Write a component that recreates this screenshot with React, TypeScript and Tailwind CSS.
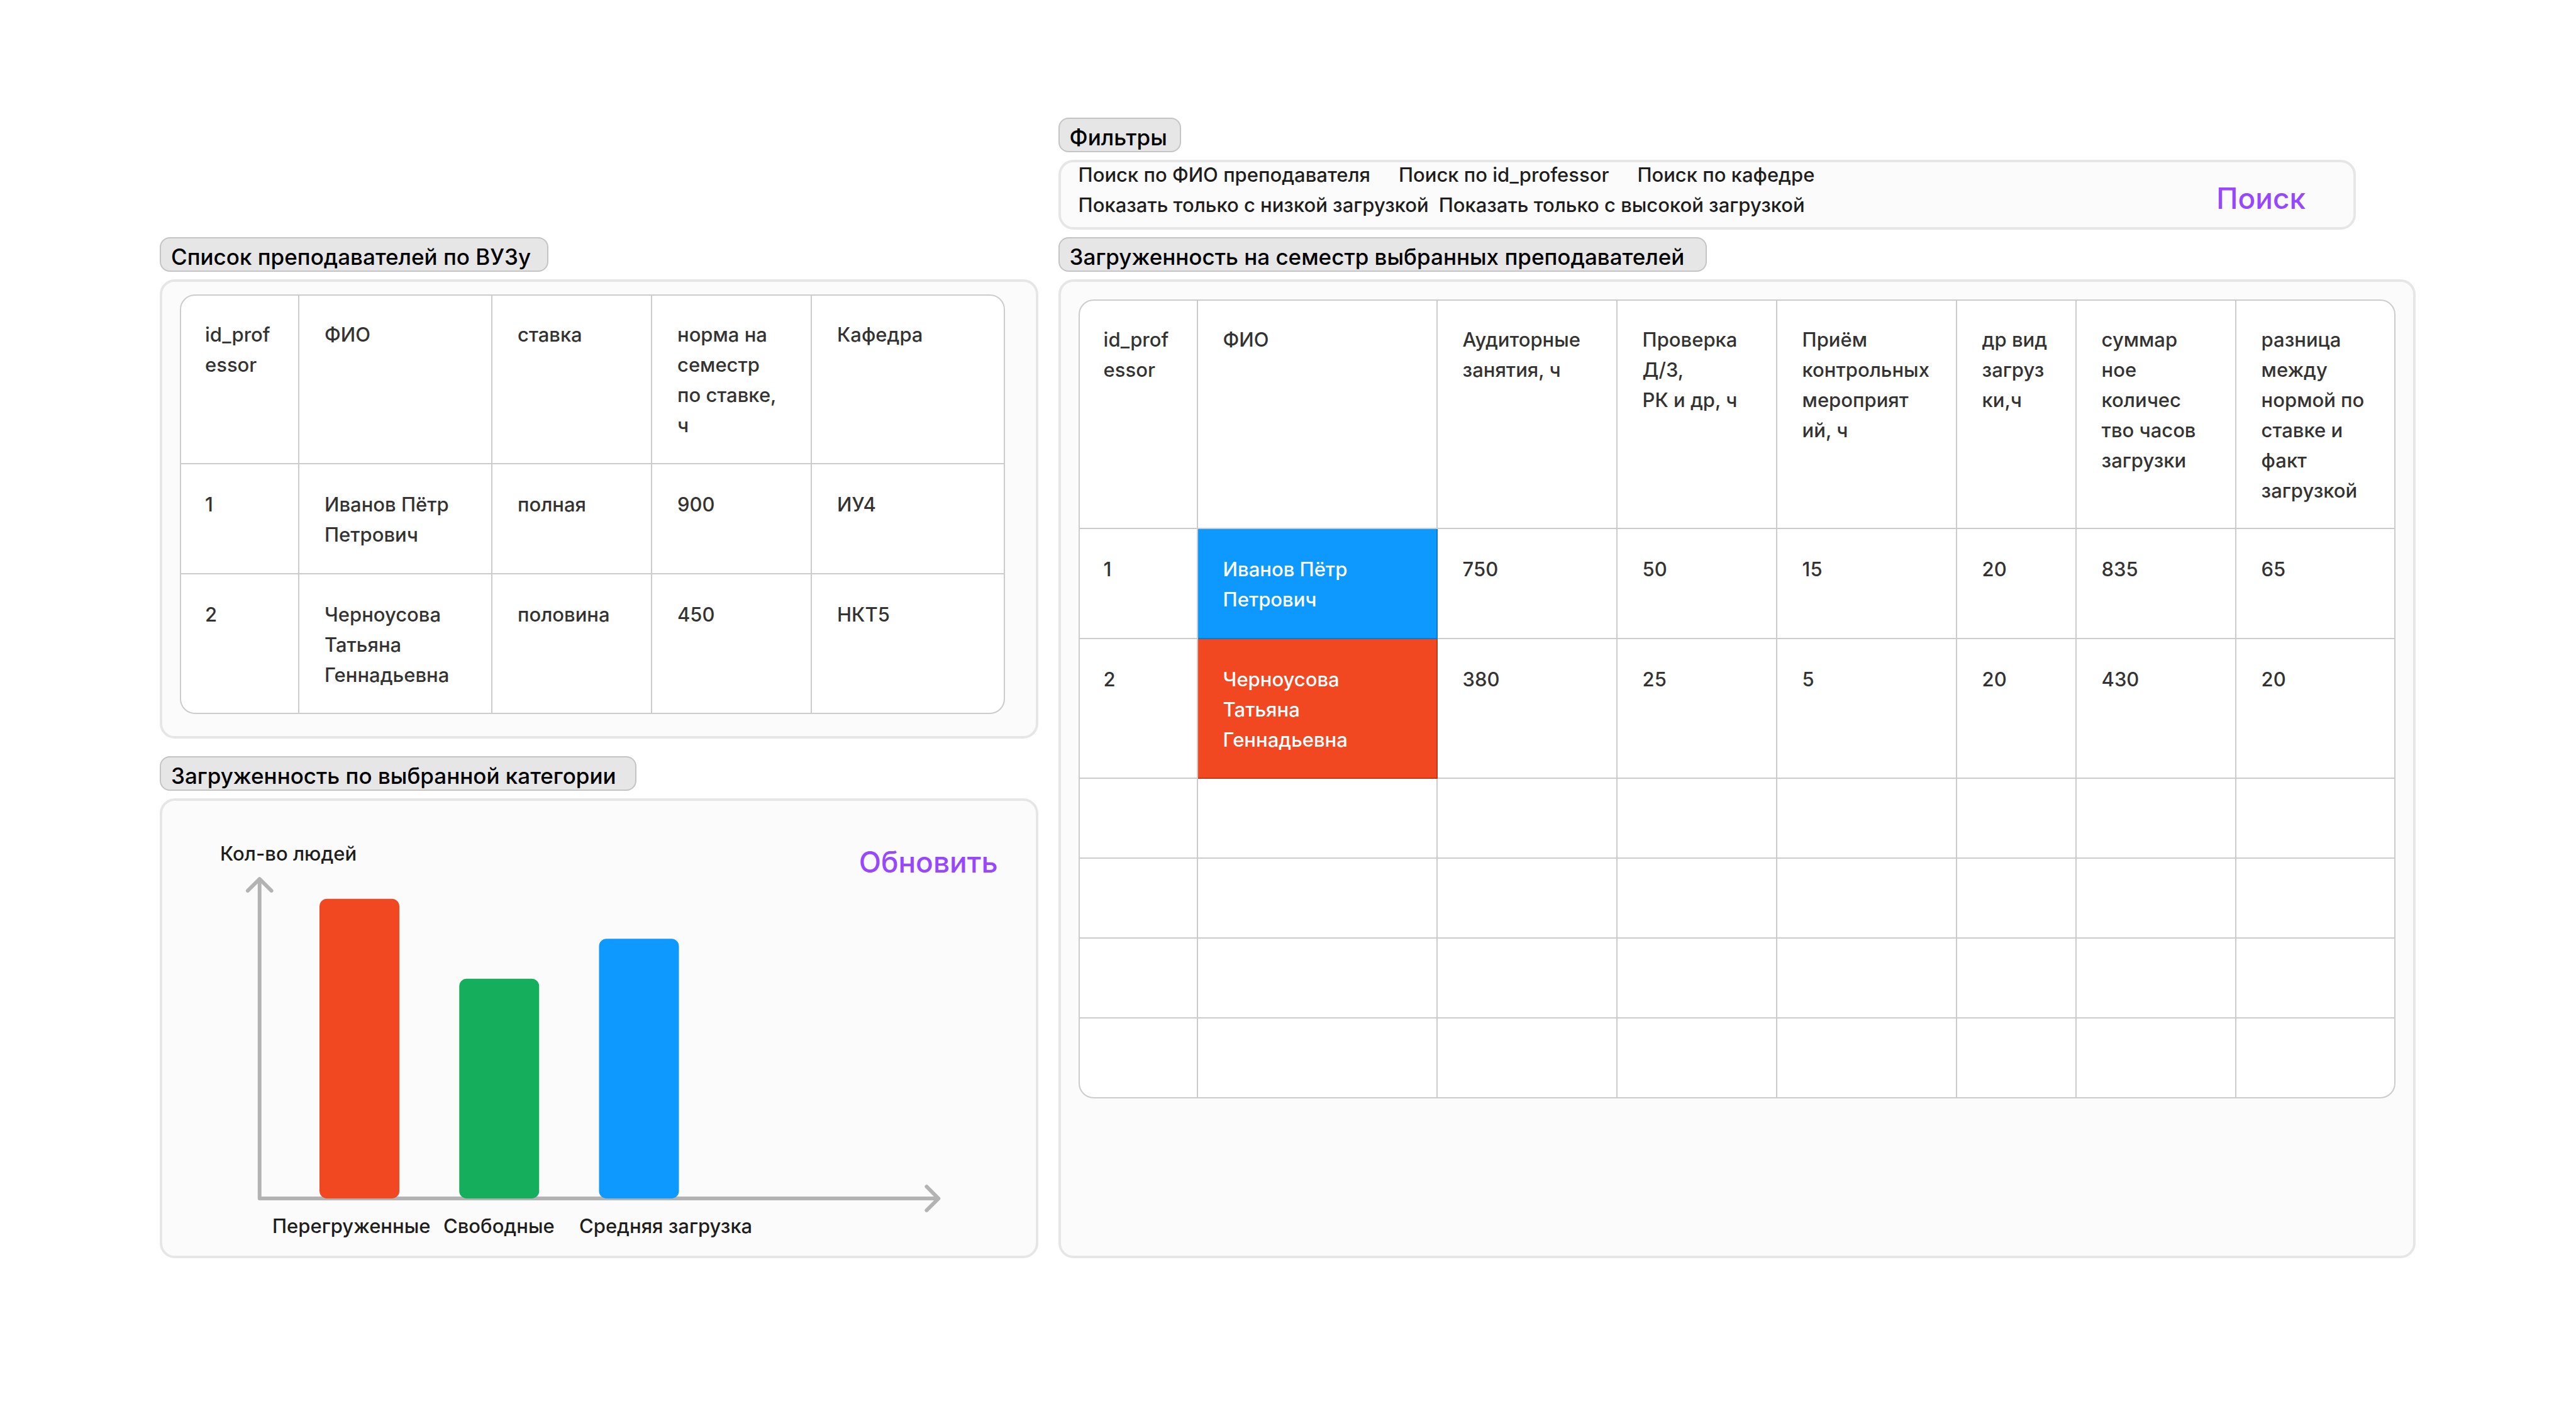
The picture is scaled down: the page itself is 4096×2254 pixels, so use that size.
type Column = { title: string; width: string };
type Cell = { text: string; tone?: "blue" | "red" };
type Row = { height: string; cells: Cell[] };

const plain = (...texts: string[]): Cell[] => texts.map((text) => ({ text }));

const professorColumns: Column[] = [
  { title: "id_prof\nessor", width: "w-[188px]" },
  { title: "ФИО", width: "w-[307px]" },
  { title: "ставка", width: "w-[254px]" },
  { title: "норма на\nсеместр\nпо ставке,\nч", width: "w-[254px]" },
  { title: "Кафедра", width: "w-[306px]" },
];

const professorRows: Row[] = [
  { height: "h-[175px]", cells: plain("1", "Иванов Пётр\nПетрович", "полная", "900", "ИУ4") },
  { height: "h-[220px]", cells: plain("2", "Черноусова\nТатьяна\nГеннадьевна", "половина", "450", "НКТ5") },
];

const loadColumns: Column[] = [
  { title: "id_prof\nessor", width: "w-[188px]" },
  { title: "ФИО", width: "w-[381px]" },
  { title: "Аудиторные\nзанятия, ч", width: "w-[286px]" },
  { title: "Проверка\nД/З,\nРК и др, ч", width: "w-[254px]" },
  { title: "Приём\nконтрольных\nмероприят\nий, ч", width: "w-[286px]" },
  { title: "др вид\nзагруз\nки,ч", width: "w-[190px]" },
  { title: "суммар\nное\nколичес\nтво часов\nзагрузки", width: "w-[254px]" },
  { title: "разница\nмежду\nнормой по\nставке и\nфакт\nзагрузкой", width: "w-[252px]" },
];

const emptyCells = plain("", "", "", "", "", "", "", "");

const loadRows: Row[] = [
  {
    height: "h-[175px]",
    cells: [{ text: "1" }, { text: "Иванов Пётр\nПетрович", tone: "blue" }, ...plain("750", "50", "15", "20", "835", "65")],
  },
  {
    height: "h-[222px]",
    cells: [
      { text: "2" },
      { text: "Черноусова\nТатьяна\nГеннадьевна", tone: "red" },
      ...plain("380", "25", "5", "20", "430", "20"),
    ],
  },
  { height: "h-[127px]", cells: emptyCells },
  { height: "h-[127px]", cells: emptyCells },
  { height: "h-[127px]", cells: emptyCells },
  { height: "h-[125px]", cells: emptyCells },
];

const toneClass = {
  blue: "bg-[#0d99ff] text-white",
  red: "bg-[#f24822] text-white",
};

function SectionLabel({ text, id, pad }: { text: string; id: string; pad: string }) {
  return (
    <h2
      id={id}
      className={`mb-3 flex h-[55px] w-fit shrink-0 items-center rounded-2xl border-2 border-[#c4c4c4] bg-[#e6e6e6] pt-1.5 pl-4 text-[35px] leading-[44px] font-medium whitespace-nowrap text-black ${pad}`}
    >
      {text}
    </h2>
  );
}

function DataTable({
  columns,
  rows,
  headHeight,
  labelledBy,
}: {
  columns: Column[];
  rows: Row[];
  headHeight: string;
  labelledBy: string;
}) {
  return (
    <div className="overflow-hidden rounded-3xl border-2 border-[#cccccc] bg-white">
      <table
        aria-labelledby={labelledBy}
        className="w-full table-fixed border-separate border-spacing-0 text-left text-[31px] leading-[48px] text-[#333333]"
      >
        <colgroup>
          {columns.map((column, i) => (
            <col key={i} className={column.width} />
          ))}
        </colgroup>
        <thead>
          <tr className={headHeight}>
            {columns.map((column, i) => (
              <th
                key={i}
                scope="col"
                className="border-r-2 border-b-2 border-black/20 pt-[38px] pl-10 align-top font-medium whitespace-pre first:pl-[38px] last:border-r-0"
              >
                {column.title}
              </th>
            ))}
          </tr>
        </thead>
        <tbody className="[&>tr:last-child>td]:border-b-0">
          {rows.map((row, r) => (
            <tr key={r} className={row.height}>
              {row.cells.map((cell, c) => (
                <td
                  key={c}
                  className={`border-r-2 border-b-2 border-black/20 pt-10 pl-10 align-top font-medium whitespace-pre first:pl-[38px] last:border-r-0 ${cell.tone ? toneClass[cell.tone] : ""}`}
                >
                  {cell.text}
                </td>
              ))}
            </tr>
          ))}
        </tbody>
      </table>
    </div>
  );
}

const bars = [
  { x: 512, height: 480, fill: "#f24822" },
  { x: 736, height: 352, fill: "#14ae5c" },
  { x: 960, height: 416, fill: "#0d99ff" },
];

function LoadChart() {
  return (
    <svg viewBox="384 1400 1152 544" className="block h-[540px] w-[1143px]" aria-hidden="true">
      <g fill="none" stroke="#b3b3b3" strokeWidth="6" strokeLinecap="round" strokeLinejoin="round">
        <path d="M416 1409V1920H1503" />
        <path d="M397 1427L416 1408L435 1427" />
        <path d="M1485 1901L1504 1920L1485 1939" />
      </g>
      {bars.map((bar) => (
        <rect key={bar.x} x={bar.x} y={1920 - bar.height} width="128" height={bar.height} rx="12" fill={bar.fill} />
      ))}
    </svg>
  );
}

export default function App() {
  return (
    <main className="grid min-h-screen grid-cols-[11fr_17fr] gap-x-8 bg-white pt-[187px] pr-[255px] pb-[254px] pl-[254px] font-['Inter',sans-serif]">
      <div className="flex min-w-0 flex-col pt-[190px]">
        <SectionLabel id="professors" pad="pr-6.5" text="Список преподавателей по ВУЗу" />
        <section className="mb-7 rounded-3xl border-4 border-[#e6e6e6] bg-[#fbfbfb] pt-5 pr-[49px] pb-[35px] pl-7">
          <DataTable columns={professorColumns} rows={professorRows} headHeight="h-[268px]" labelledBy="professors" />
        </section>

        <SectionLabel id="category" pad="pr-7.5" text="Загруженность по выбранной категории" />
        <section className="flex-1 rounded-3xl border-4 border-[#e6e6e6] bg-[#fbfbfb] pt-[60px]">
          <div className="flex h-[56px] items-start justify-between pr-[60px] pl-[92px]">
            <p className="text-[31px] leading-[48px] font-medium text-[#1e1e1e]">Кол-во людей</p>
            <button type="button" className="cursor-pointer text-[46px] leading-[74px] font-medium text-[#9747ff]">
              Обновить
            </button>
          </div>
          <div className="pl-[123px]">
            <LoadChart />
          </div>
          <div className="flex pl-[175px] text-[31px] leading-[40px] font-medium whitespace-nowrap text-[#1e1e1e]">
            <span className="w-[272px]">Перегруженные</span>
            <span className="w-[216px]">Свободные</span>
            <span>Средняя загрузка</span>
          </div>
        </section>
      </div>

      <div className="flex min-w-0 flex-col">
        <SectionLabel id="filters" pad="pr-5" text="Фильтры" />
        <section
          aria-labelledby="filters"
          className="mr-[95px] mb-3 flex h-[111px] shrink-0 items-start justify-between rounded-3xl border-4 border-[#e6e6e6] bg-[#fbfbfb] pr-[76px] pl-7"
        >
          <div className="flex flex-col gap-2 text-[31px] leading-[40px] font-medium whitespace-nowrap text-[#1e1e1e]">
            <div className="flex gap-[45px]">
              <button type="button" className="cursor-pointer">Поиск по ФИО преподавателя</button>
              <button type="button" className="cursor-pointer">Поиск по id_professor</button>
              <button type="button" className="cursor-pointer">Поиск по кафедре</button>
            </div>
            <div className="flex gap-4">
              <button type="button" className="cursor-pointer">Показать только с низкой загрузкой</button>
              <button type="button" className="cursor-pointer">Показать только с высокой загрузкой</button>
            </div>
          </div>
          <button type="button" className="mt-5 cursor-pointer text-[46px] leading-[74px] font-medium text-[#9747ff]">
            Поиск
          </button>
        </section>

        <SectionLabel id="load" pad="pr-8.5" text="Загруженность на семестр выбранных преподавателей" />
        <section className="flex-1 rounded-3xl border-4 border-[#e6e6e6] bg-[#fbfbfb] p-7">
          <DataTable columns={loadColumns} rows={loadRows} headHeight="h-[363px]" labelledBy="load" />
        </section>
      </div>
    </main>
  );
}
